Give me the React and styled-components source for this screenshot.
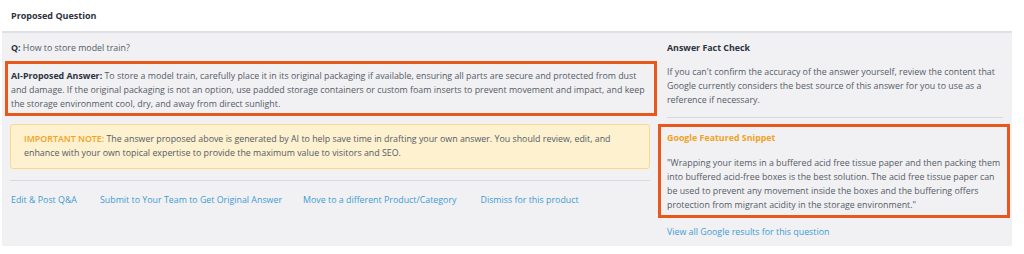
import React from "react";
import styled, { createGlobalStyle } from "styled-components";

const Global = createGlobalStyle`
  html, body { margin: 0; padding: 0; background: #ffffff; }
  body { font-family: "Open Sans", "Liberation Sans", sans-serif; color: #555b66; }
`;

const Page = styled.div`
  width: 1024px;
  height: 254px;
  background: #ffffff;
`;

const Header = styled.div`
  height: 31px;
  display: flex;
  align-items: center;
  padding-left: 11px;
  font-size: 9px;
  font-weight: 700;
  color: #2d3340;
`;

const Panel = styled.div`
  margin-left: 2px;
  width: 1010px;
  height: 215px;
  box-sizing: border-box;
  background: #f1f1f3;
  border-top: 2px solid #dde0e5;
  display: flex;
  padding: 8px 0 0 8px;
  font-size: 8.85px;
  line-height: 14px;
`;

const LeftCol = styled.div`
  width: 640px;
  display: flex;
  flex-direction: column;
`;

const RightCol = styled.div`
  width: 336px;
  margin-left: 17px;
  display: flex;
  flex-direction: column;
`;

const Label = styled.span`
  font-weight: 700;
  color: #2d3340;
`;

const Line = styled.div`
  padding-left: 1px;
`;

const Highlight = styled.div`
  border: 3px solid #e8581c;
  margin: ${(p) => p.$margin};
  padding: ${(p) => p.$padding};
`;

const Note = styled.div`
  margin-top: 8px;
  background: #fdf1cf;
  border: 1px solid #f6d98c;
  border-radius: 3px;
  padding: 7px 13px 8px;
`;

const NoteLabel = styled.span`
  font-weight: 600;
  color: #f2a21f;
`;

const Divider = styled.div`
  height: 1px;
  background: #d6d9de;
  margin: ${(p) => p.$margin};
`;

const Links = styled.div`
  display: flex;
  padding-left: 1px;
  margin-top: 12px;
`;

const Link = styled.a`
  color: #3d9bd3;
  text-decoration: none;
  margin-right: ${(p) => p.$gap}px;
  cursor: pointer;
`;

const Title = styled.div`
  font-weight: 700;
  color: ${(p) => p.$color || "#2d3340"};
`;

const Para = styled.div`
  margin-top: ${(p) => p.$mt || 0}px;
`;

export default function App() {
  return (
    <>
      <Global />
      <Page>
        <Header>Proposed Question</Header>
        <Panel>
          <LeftCol>
            <Line>
              <Label>Q:</Label> How to store model train?
            </Line>
            <Highlight $margin="6px -7px 0 -5px" $padding="5px 4px 2px 3px">
              <Label>AI-Proposed Answer:</Label> To store a model train, carefully place it in its original
              packaging if available, ensuring all parts are secure and protected from dust and damage. If
              the original packaging is not an option, use padded storage containers or custom foam inserts
              to prevent movement and impact, and keep the storage environment cool, dry, and away from
              direct sunlight.
            </Highlight>
            <Note>
              <NoteLabel>IMPORTANT NOTE:</NoteLabel> The answer proposed above is generated by AI to help save
              time in drafting your own answer. You should review, edit, and enhance with your own topical
              expertise to provide the maximum value to visitors and SEO.
            </Note>
            <Divider $margin="11px 0 0 0" />
            <Links>
              <Link $gap={23}>Edit &amp; Post Q&amp;A</Link>
              <Link $gap={21}>Submit to Your Team to Get Original Answer</Link>
              <Link $gap={24}>Move to a different Product/Category</Link>
              <Link $gap={0}>Dismiss for this product</Link>
            </Links>
          </LeftCol>
          <RightCol>
            <Title>Answer Fact Check</Title>
            <Para $mt={10}>
              If you can't confirm the accuracy of the answer yourself, review the content that Google
              currently considers the best source of this answer for you to use as a reference if necessary.
            </Para>
            <Divider $margin="10px 0 0 0" />
            <Highlight $margin="6px -7px 0 -9px" $padding="4px 4px 3px 6px">
              <Title $color="#f2a21f">Google Featured Snippet</Title>
              <Para $mt={11}>
                "Wrapping your items in a buffered acid free tissue paper and then packing them into buffered
                acid-free boxes is the best solution. The acid free tissue paper can be used to prevent any
                movement inside the boxes and the buffering offers protection from migrant acidity in the
                storage environment."
              </Para>
            </Highlight>
            <Para $mt={7}>
              <Link $gap={0}>View all Google results for this question</Link>
            </Para>
          </RightCol>
        </Panel>
      </Page>
    </>
  );
}
